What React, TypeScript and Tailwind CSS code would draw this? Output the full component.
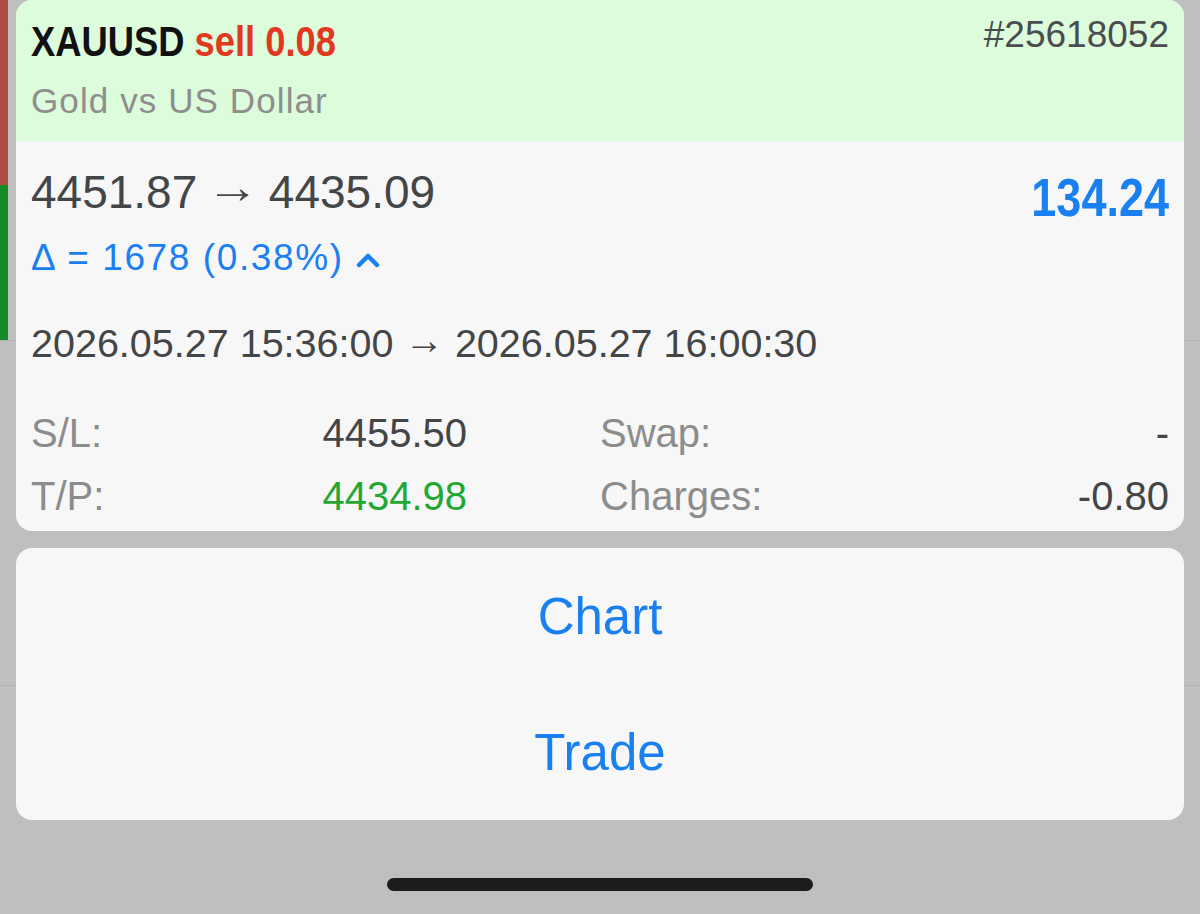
import React from 'react';

const Row: React.FC<{ label: string; value: string; valueClass?: string }> = ({ label, value, valueClass }) => (
  <div className="flex justify-between leading-[63px]">
    <span className="text-[#8c8c8c]">{label}</span>
    <span className={valueClass || 'text-[#434547]'}>{value}</span>
  </div>
);

const App: React.FC = () => {
  return (
    <div className="relative w-[1200px] h-[914px] overflow-hidden bg-[#bfbfbf] font-['Liberation_Sans',Arial,sans-serif]">
      {/* dimmed list behind the sheet */}
      <div className="absolute inset-0">
        <div className="w-[8px] h-[185px] bg-[#b04c45]" />
        <div className="w-[8px] h-[155px] bg-[#178b2a]" />
        <div className="h-px bg-[#b1b1b1]" />
        <div className="h-[344px]" />
        <div className="h-px bg-[#b1b1b1]" />
      </div>

      <div className="relative flex flex-col px-[16px]">
        <div className="rounded-[16px] overflow-hidden bg-[#f7f7f7]">
          <div className="h-[141px] bg-[#dcfcdc] px-[15px] pt-[21px]">
            <div className="flex justify-between items-start">
              <div className="inline-block origin-left scale-x-[0.865] whitespace-nowrap text-[42px] leading-[42px] font-bold">
                <span className="text-[#111]">XAUUSD</span>{' '}
                <span className="text-[#e0391f]">sell 0.08</span>
              </div>
              <div className="text-[37px] leading-[28px] text-[#4a4d4f]">#25618052</div>
            </div>
            <div className="mt-[18px] text-[35px] leading-[40px] tracking-[1.1px] text-[#8e8e8e]">Gold vs US Dollar</div>
          </div>

          <div className="px-[15px] pt-[25px] pb-[3px] text-[#434547]">
            <div className="flex justify-between items-start">
              <div className="text-[46px] leading-[52px]">
                4451.87 <span className="inline-block -translate-y-[5px] scale-x-[1.15]">→</span> 4435.09
              </div>
              <div className="mt-[6px] inline-block origin-right scale-x-[0.85] text-[53px] leading-[52px] font-bold text-[#1a80f2]">134.24</div>
            </div>
            <div className="mt-[12px] flex items-center text-[37px] leading-[44px] tracking-[1.6px] text-[#1a80f2]">
              <span>Δ = 1678 (0.38%)</span>
              <svg className="ml-[12px] mt-[4px]" width="24" height="16" viewBox="0 0 24 16" fill="none">
                <path d="M3 13 L12 4 L21 13" stroke="#1a80f2" strokeWidth="4.5" strokeLinecap="round" strokeLinejoin="round" />
              </svg>
            </div>
            <div className="mt-[39px] text-[39.5px] leading-[48px]">
              2026.05.27 15:36:00 <span className="inline-block -translate-y-[3px]">→</span> 2026.05.27 16:00:30
            </div>
            <div className="mt-[35px] grid grid-cols-[436px_1fr] gap-x-[133px] text-[40px]">
              <div>
                <Row label="S/L:" value="4455.50" />
                <Row label="T/P:" value="4434.98" valueClass="text-[#22a832]" />
              </div>
              <div>
                <Row label="Swap:" value="-" />
                <Row label="Charges:" value="-0.80" />
              </div>
            </div>
          </div>
        </div>

        <div className="mt-[17px] rounded-[16px] bg-[#f7f7f7] text-[#1a80f2] text-[51px]">
          <div className="h-[136px] flex items-center justify-center leading-[51px]">Chart</div>
          <div className="h-[136px] flex items-center justify-center leading-[51px]">Trade</div>
        </div>

        <div className="mt-[58px] mx-auto w-[426px] h-[13px] rounded-full bg-[#1c1c1c]" />
      </div>
    </div>
  );
};

export default App;
